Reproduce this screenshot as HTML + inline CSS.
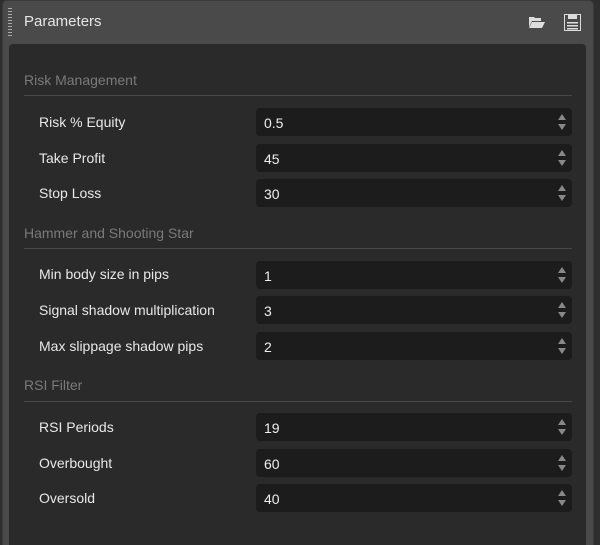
<!DOCTYPE html>
<html style="overflow:hidden;height:545px"><head><style>
body{margin:0;width:600px;height:545px;background:#2e2e2e;font-family:"Liberation Sans",sans-serif;overflow:hidden;position:relative}
.frame{position:absolute;left:2px;top:0;width:592px;height:545px;background:#4a4a4a;border-radius:5px 5px 0 0;border:1px solid #3a3a3a;border-bottom:none;box-sizing:border-box}
.grip{position:absolute;left:8px;top:8px;width:4px;height:28px;background:repeating-linear-gradient(#aaa 0 1px,transparent 1px 3px)}
.title{position:absolute;left:24px;top:13px;color:#e6e6e6;font-size:15px}
.inner{position:absolute;left:9px;top:44px;width:577px;height:501px;background:#2a2a2a;border-radius:4px 4px 0 0}
.sec{position:absolute;left:24px;color:#7a7a7a;font-size:14px}
.line{position:absolute;left:24px;width:548px;height:1px;background:#484848}
.lab{position:absolute;left:39px;color:#e8e8e8;font-size:14px}
.inp{position:absolute;left:256px;width:316px;height:28px;background:#1c1c1c;border-radius:4px}
.inp span{position:absolute;left:8px;top:7px;color:#eee;font-size:14px}
.inp i{position:absolute;right:6px;width:0;height:0;border-left:4px solid transparent;border-right:4px solid transparent}
.inp i.u{top:6px;border-bottom:6px solid #888}
.inp i.d{top:16px;border-top:6px solid #888}
</style></head><body>
<div class="frame"></div>
<div class="grip"></div>
<div class="title">Parameters</div>
<svg style="position:absolute;left:528px;top:14px" width="18" height="16" viewBox="0 0 18 16"><path d="M1 3h5l1 1h6v3H4L1 13z" fill="#ddd"/><path d="M4 8h13l-3 6H1z" fill="#ddd"/></svg>
<svg style="position:absolute;left:564px;top:14px" width="17" height="17" viewBox="0 0 17 17"><rect x="0.5" y="0.5" width="16" height="16" fill="none" stroke="#ddd"/><rect x="4" y="1" width="9" height="4" fill="#ddd"/><rect x="3" y="8" width="11" height="1.5" fill="#ddd"/><rect x="3" y="11" width="11" height="1.5" fill="#ddd"/><rect x="3" y="14" width="11" height="1.5" fill="#ddd"/></svg>
<div class="inner"></div>
<div class="sec" style="top:72px">Risk Management</div><div class="line" style="top:95px"></div>
<div class="lab" style="top:114px">Risk % Equity</div><div class="inp" style="top:108px"><span>0.5</span><i class="u"></i><i class="d"></i></div>
<div class="lab" style="top:150px">Take Profit</div><div class="inp" style="top:144px"><span>45</span><i class="u"></i><i class="d"></i></div>
<div class="lab" style="top:185px">Stop Loss</div><div class="inp" style="top:179px"><span>30</span><i class="u"></i><i class="d"></i></div>
<div class="sec" style="top:225px">Hammer and Shooting Star</div><div class="line" style="top:248px"></div>
<div class="lab" style="top:266px">Min body size in pips</div><div class="inp" style="top:261px"><span>1</span><i class="u"></i><i class="d"></i></div>
<div class="lab" style="top:302px">Signal shadow multiplication</div><div class="inp" style="top:296px"><span>3</span><i class="u"></i><i class="d"></i></div>
<div class="lab" style="top:338px">Max slippage shadow pips</div><div class="inp" style="top:332px"><span>2</span><i class="u"></i><i class="d"></i></div>
<div class="sec" style="top:377px">RSI Filter</div><div class="line" style="top:401px"></div>
<div class="lab" style="top:419px">RSI Periods</div><div class="inp" style="top:413px"><span>19</span><i class="u"></i><i class="d"></i></div>
<div class="lab" style="top:455px">Overbought</div><div class="inp" style="top:449px"><span>60</span><i class="u"></i><i class="d"></i></div>
<div class="lab" style="top:490px">Oversold</div><div class="inp" style="top:484px"><span>40</span><i class="u"></i><i class="d"></i></div>
</body></html>
